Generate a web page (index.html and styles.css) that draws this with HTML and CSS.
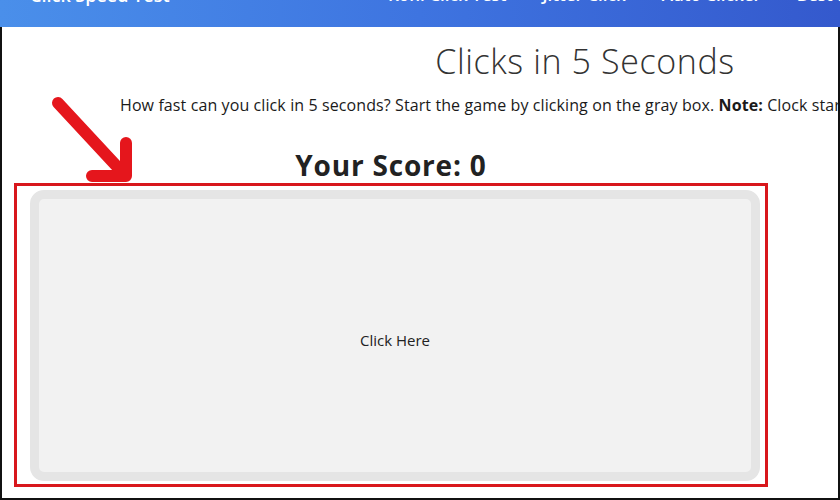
FILE: index.html
```html
<!DOCTYPE html>
<html lang="en">
<head>
    <meta charset="UTF-8">
    <meta name="viewport" content="width=device-width, initial-scale=1.0">
    <title>Clicks in 5 Seconds</title>
    <link rel="stylesheet" href="styles.css">
</head>
<body>
    <div class="nav-bar">
        <a class="brand" href="#">Click Speed Test</a>
        <div class="nav-links">
            <a href="#">Kohi Click Test</a>
            <a href="#">Jitter Click</a>
            <a href="#">Auto Clicker</a>
            <a href="#">Best Mouse</a>
        </div>
    </div>

    <main class="page">
        <section class="intro">
            <h1>Clicks in 5 Seconds</h1>
            <p>How fast can you click in 5 seconds? Start the game by clicking on the gray box. <b>Note:</b> Clock starts when you click the box for the first time.</p>
        </section>

        <section class="game">
            <h2>Your Score: <span id="score">0</span></h2>
            <div class="highlight">
                <div class="click-box" id="clickBox">Click Here</div>
            </div>
        </section>

        <svg class="arrow" width="150" height="200" viewBox="0 0 150 200">
            <path d="M58 103 L123 173 M126 143 L126 176 L92 176" fill="none" stroke="#e5161c" stroke-width="12" stroke-linecap="round" stroke-linejoin="round"/>
        </svg>
    </main>
</body>
</html>
```

FILE: styles.css
```css
body {
    margin: 0;
    padding: 0;
    font-family: 'Open Sans', 'Noto Sans', sans-serif;
    color: #222;
    background: #ffffff;
    overflow: hidden;
}

.nav-bar {
    height: 27px;
    overflow: hidden;
    display: flex;
    align-items: flex-end;
    padding-left: 30px;
    background: linear-gradient(to right, #4a8fea, #3e74e0 50%, #3459cd);
}

.nav-bar a {
    color: #ffffff;
    text-decoration: none;
    white-space: nowrap;
    margin-bottom: 22px;
    line-height: 20px;
}

.brand {
    flex-shrink: 0;
    font-size: 18px;
    font-weight: 600;
    width: 358px;
}

.nav-links {
    display: flex;
    flex-shrink: 0;
    gap: 36px;
}

.nav-links a {
    font-size: 17px;
    font-weight: 600;
}

.page {
    position: relative;
    height: 473px;
    box-sizing: border-box;
    border-left: 2px solid #111;
    border-right: 2px solid #111;
    border-bottom: 2px solid #111;
    overflow: hidden;
}

.intro {
    width: 930px;
    margin-left: 118px;
}

h1 {
    margin: 13px 0 0;
    text-align: center;
    font-size: 34px;
    font-weight: 300;
    letter-spacing: 0.6px;
    line-height: 42px;
    color: #333;
}

.intro p {
    margin: 12px 0 0;
    font-size: 16px;
    letter-spacing: 0.1px;
    line-height: 22px;
    white-space: nowrap;
    color: #1a1a1a;
}

.game {
    width: 754px;
    margin-left: 12px;
}

h2 {
    margin: 31px 0 0;
    text-align: center;
    font-size: 28px;
    font-weight: 700;
    letter-spacing: 0.8px;
    line-height: 36px;
    color: #222;
}

.highlight {
    height: 304px;
    box-sizing: border-box;
    border: 3px solid #d8171c;
    padding: 4px 5px 3px 13px;
}

.click-box {
    height: 100%;
    box-sizing: border-box;
    border: 9px solid #e5e5e5;
    border-radius: 14px;
    background: #f2f2f2;
    display: flex;
    align-items: center;
    justify-content: center;
    padding-top: 8px;
    font-size: 15px;
    color: #222;
    cursor: pointer;
}

.arrow {
    position: absolute;
    left: -2px;
    top: -27px;
}
```
